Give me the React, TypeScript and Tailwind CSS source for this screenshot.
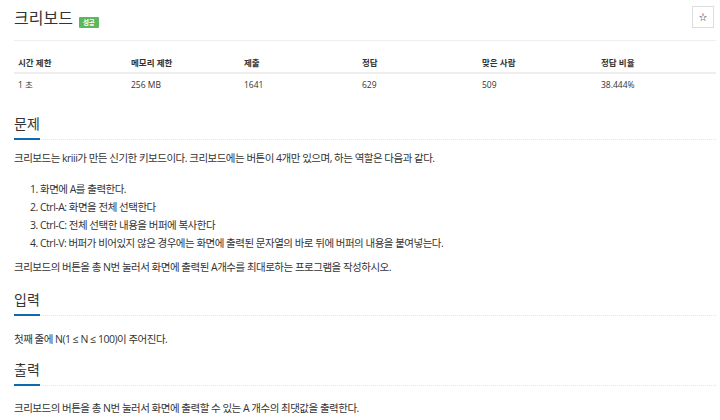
import React from 'react';

const FONT = '"Open Sans", "Noto Sans CJK KR", sans-serif';

const stats = [
    { label: '시간 제한', value: '1 초' },
    { label: '메모리 제한', value: '256 MB' },
    { label: '제출', value: '1641' },
    { label: '정답', value: '629' },
    { label: '맞은 사람', value: '509' },
    { label: '정답 비율', value: '38.444%' },
];

const Headline = ({ title }: { title: string }) => (
    <div className="flex border-b border-dotted border-[#e5e5e5]">
        <h2 className="text-[14px] leading-[20px] text-[#333] pb-[4px] border-b-2 border-[#0b6ab0] -mb-px">{title}</h2>
    </div>
);

export default function App() {
    return (
        <div className="w-[720px] h-[420px] overflow-hidden bg-white pl-[14px] pr-[4px] text-[#333]" style={{ fontFamily: FONT }}>
            <div className="flex items-start justify-between pt-[6px] pb-[10px] border-b border-[#eee]">
                <div className="flex items-end gap-[6px]">
                    <h1 className="text-[16px] leading-[24px] text-[#333]">크리보드</h1>
                    <span className="mb-[2px] bg-[#5cb85c] text-white text-[6.5px] font-bold leading-[11px] px-[4px] rounded-[1px]">성공</span>
                </div>
                <button className="w-[22px] h-[22px] mr-[2px] border border-[#ddd] flex items-center justify-center text-[8px] text-[#222]">☆</button>
            </div>

            <div className="mt-[13px] grid grid-cols-[113px_113px_118px_120px_119px_1fr] text-[8.5px]">
                {stats.map((s) => (
                    <div key={s.label} className="h-[20px] px-[4px] flex items-center font-bold border-b-2 border-[#eee]">{s.label}</div>
                ))}
                {stats.map((s) => (
                    <div key={s.label + 'v'} className="h-[22px] px-[4px] flex items-center">{s.value}</div>
                ))}
            </div>

            <section className="mt-[18px]">
                <Headline title="문제" />
                <div className="text-[10.5px] tracking-[-0.5px] leading-[18px] mt-[9px]">
                    <p>크리보드는 kriii가 만든 신기한 키보드이다. 크리보드에는 버튼이 4개만 있으며, 하는 역할은 다음과 같다.</p>
                    <ol className="list-decimal pl-[26px] mt-[13px]">
                        <li>화면에 A를 출력한다.</li>
                        <li>Ctrl-A: 화면을 전체 선택한다</li>
                        <li>Ctrl-C: 전체 선택한 내용을 버퍼에 복사한다</li>
                        <li>Ctrl-V: 버퍼가 비어있지 않은 경우에는 화면에 출력된 문자열의 바로 뒤에 버퍼의 내용을 붙여넣는다.</li>
                    </ol>
                    <p className="mt-[6px]">크리보드의 버튼을 총 N번 눌러서 화면에 출력된 A개수를 최대로하는 프로그램을 작성하시오.</p>
                </div>
            </section>

            <section className="mt-[14px]">
                <Headline title="입력" />
                <p className="text-[10.5px] tracking-[-0.5px] leading-[18px] mt-[14px]">첫째 줄에 N(1 ≤ N ≤ 100)이 주어진다.</p>
            </section>

            <section className="mt-[12px]">
                <Headline title="출력" />
                <p className="text-[10.5px] tracking-[-0.5px] leading-[18px] mt-[13px]">크리보드의 버튼을 총 N번 눌러서 화면에 출력할 수 있는 A 개수의 최댓값을 출력한다.</p>
            </section>
        </div>
    );
}
